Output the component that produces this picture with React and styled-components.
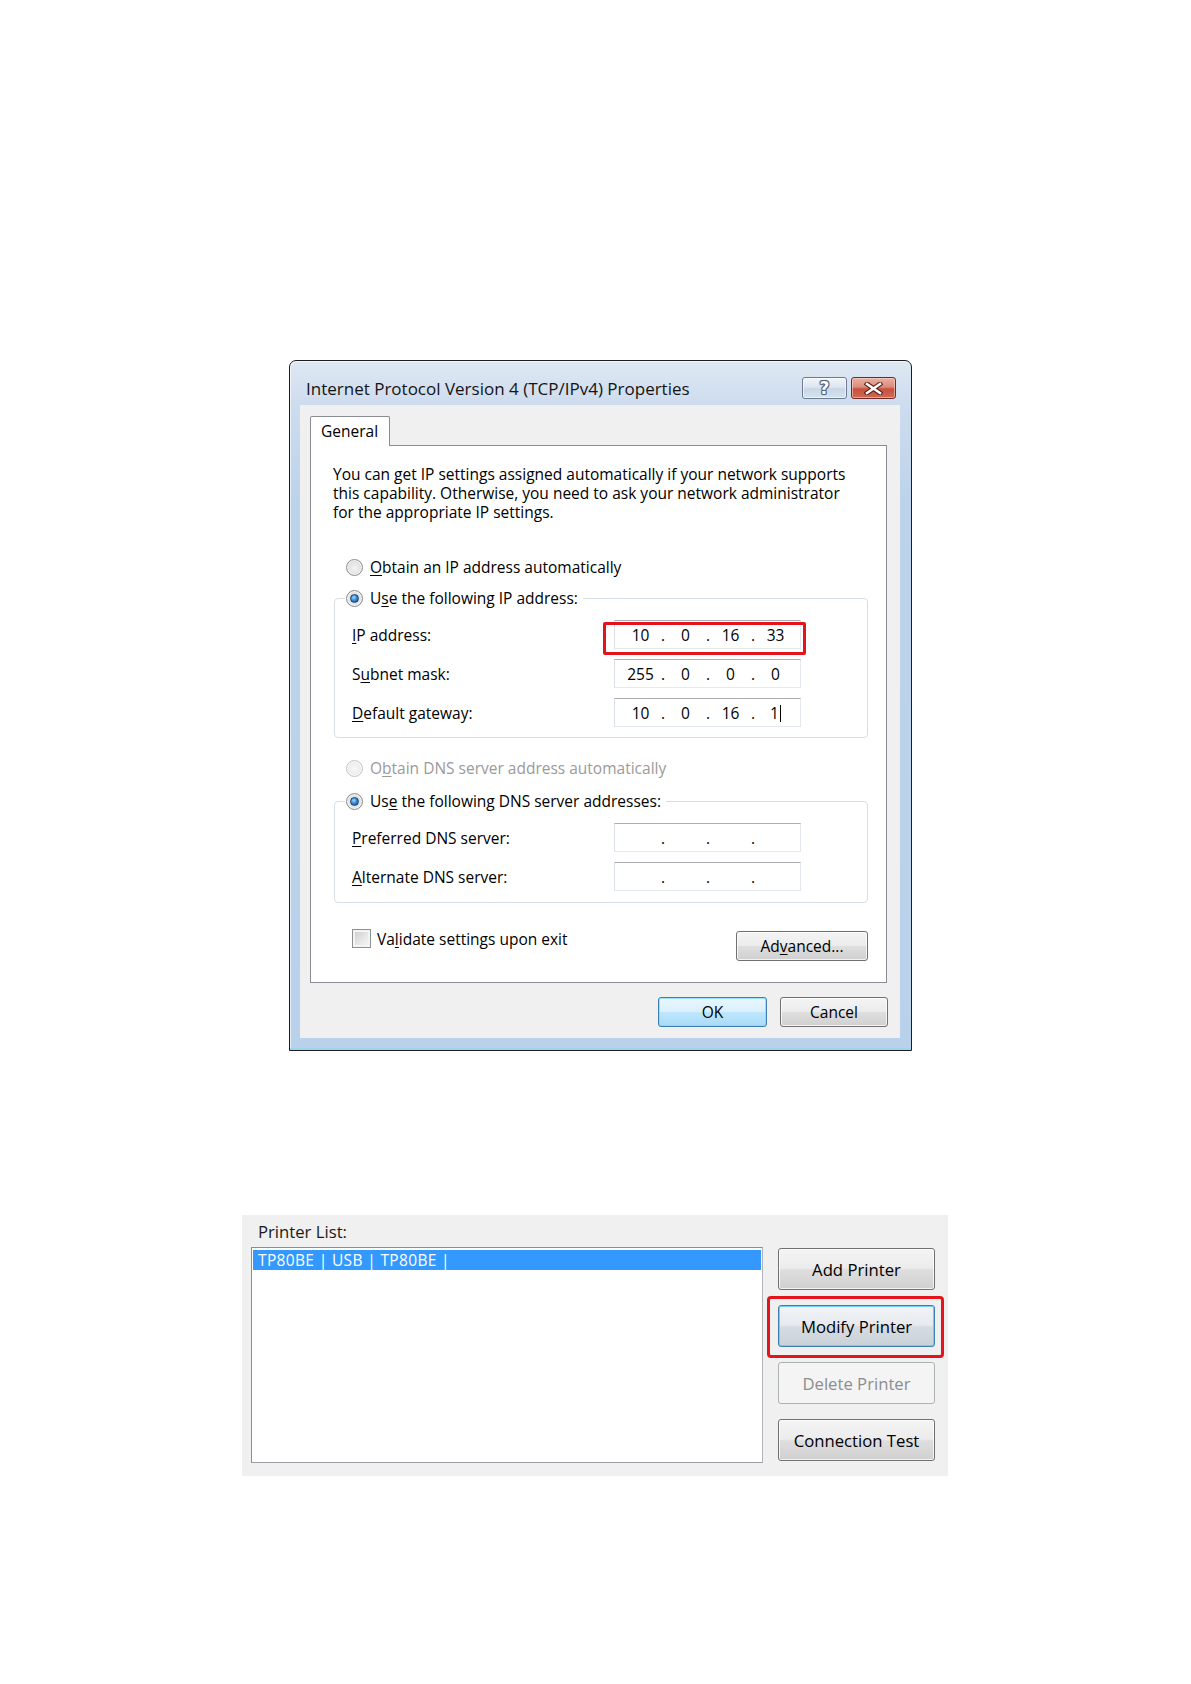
import React from "react";
import styled, { createGlobalStyle, css } from "styled-components";

const GlobalStyle = createGlobalStyle`
  html, body { margin: 0; padding: 0; background: #ffffff; }
  body {
    font-family: "Open Sans", "Noto Sans", "DejaVu Sans", sans-serif;
    color: #000;
    -webkit-font-smoothing: antialiased;
  }
  #root { width: 1191px; min-height: 1684px; }
  u { text-decoration-thickness: 1px; text-underline-offset: 2px; }
`;

const Page = styled.div`
  display: flex;
  flex-direction: column;
  align-items: flex-start;
  padding-top: 360px;
  padding-bottom: 208px;
`;

/* ---------- Dialog window ---------- */

const Dialog = styled.div`
  margin-left: 289px;
  width: 623px;
  height: 691px;
  box-sizing: border-box;
  border: 1px solid #1d1d1d;
  border-radius: 7px 7px 0 0;
  background: linear-gradient(
    to bottom,
    #dfe8f3 0px,
    #cddcee 44px,
    #bcd3eb 140px,
    #b9d1ea 100%
  );
  box-shadow: inset 0 -2px 0 #9fd6ee, inset 1px 1px 0 rgba(255, 255, 255, 0.6);
  display: flex;
  flex-direction: column;
  padding: 0 11px 12px 10px;
`;

const TitleBar = styled.div`
  height: 44px;
  box-sizing: border-box;
  padding: 10px 4px 0 6px;
  display: flex;
  align-items: center;
  gap: 4px;
`;

const Title = styled.div`
  flex: 1;
  font-size: 17px;
  color: #141414;
  white-space: nowrap;
`;

const CaptionButton = styled.div`
  width: 45px;
  height: 22px;
  box-sizing: border-box;
  border-radius: 3px;
  display: flex;
  align-items: center;
  justify-content: center;
  ${(p) =>
    p.$close
      ? css`
          border: 1px solid #6e2a24;
          background: linear-gradient(
            to bottom,
            #eab0a2 0%,
            #dc8c7c 45%,
            #c8503f 55%,
            #cf6a52 100%
          );
          box-shadow: inset 0 0 0 1px rgba(255, 220, 210, 0.55);
        `
      : css`
          border: 1px solid #6c7b90;
          background: linear-gradient(
            to bottom,
            #f1f5fa 0%,
            #dde6f1 45%,
            #c9d6e6 55%,
            #d6e2ef 100%
          );
          box-shadow: inset 0 0 0 1px rgba(255, 255, 255, 0.6);
        `}
`;

const HelpGlyph = styled.span`
  font-family: "DejaVu Sans", sans-serif;
  font-weight: bold;
  font-size: 17px;
  line-height: 1;
  margin-top: 1px;
  color: #ffffff;
  text-shadow: -1px 0 #4d5d73, 1px 0 #4d5d73, 0 -1px #4d5d73, 0 1px #4d5d73,
    -1px -1px #6d7c90, 1px 1px #6d7c90, 1px -1px #6d7c90, -1px 1px #6d7c90;
`;

const Client = styled.div`
  flex: 1;
  background: #f0f0f0;
  display: flex;
  flex-direction: column;
  padding: 11px 12px 11px 10px;
`;

const TabStrip = styled.div`
  display: flex;
  position: relative;
  z-index: 1;
  margin-bottom: -1px;
`;

const Tab = styled.div`
  width: 80px;
  height: 30px;
  box-sizing: border-box;
  border: 1px solid #898c95;
  border-bottom: none;
  border-radius: 2px 2px 0 0;
  background: #ffffff;
  padding-left: 10px;
  font-size: 15.5px;
  line-height: 28px;
`;

const TabPanel = styled.div`
  height: 538px;
  box-sizing: border-box;
  border: 1px solid #898c95;
  background: #ffffff;
  margin-right: 1px;
  padding: 0 18px 0 23px;
  display: flex;
  flex-direction: column;
  font-size: 15.5px;
`;

const Intro = styled.p`
  margin: 19px 0 0 -1px;
  line-height: 19px;
  white-space: nowrap;
`;

const RadioRow = styled.div`
  display: flex;
  align-items: center;
  gap: 7px;
  height: 20px;
  padding-left: 12px;
  margin-top: ${(p) => p.$mt || 0}px;
  color: ${(p) => (p.$disabled ? "#9a9a9a" : "#000")};
  white-space: nowrap;
`;

const Radio = styled.span`
  position: relative;
  width: 17px;
  height: 17px;
  box-sizing: border-box;
  border-radius: 50%;
  flex: none;
  border: 1px solid ${(p) => (p.$disabled ? "#c4c4c4" : "#8a8c8e")};
  background: ${(p) =>
    p.$disabled
      ? "radial-gradient(circle at 50% 50%, #f7f7f7 0, #e6e6e6 100%)"
      : "radial-gradient(circle at 50% 55%, #f4f4f4 0, #e2e2e2 55%, #cfcfcf 100%)"};
  box-shadow: inset 0 0 0 1px rgba(255, 255, 255, 0.7);
  ${(p) =>
    p.$checked &&
    css`
      &::after {
        content: "";
        position: absolute;
        left: 3px;
        top: 3px;
        width: 9px;
        height: 9px;
        box-sizing: border-box;
        border-radius: 50%;
        border: 1px solid #17426f;
        background: radial-gradient(
          circle at 40% 35%,
          #a6dcff 0,
          #3b8ad6 45%,
          #124b8c 100%
        );
      }
    `}
`;

const Group = styled.fieldset`
  margin: ${(p) => p.$mt || 0}px 0 0 0;
  border: 1px solid #d5dfe5;
  border-radius: 4px;
  padding: 12px 10px ${(p) => p.$pb || 10}px 17px;
  min-width: 0;
`;

const GroupLegend = styled.legend`
  margin-left: -7px;
  padding: 0 5px 0 1px;
  height: 20px;
  line-height: 20px;
`;

const LegendInner = styled.span`
  display: inline-flex;
  align-items: center;
  gap: 7px;
  height: 20px;
  white-space: nowrap;
`;

const FieldList = styled.div`
  display: flex;
  flex-direction: column;
  gap: 10px;
`;

const FieldRow = styled.div`
  display: flex;
  align-items: center;
  height: 29px;
`;

const FieldLabel = styled.span`
  width: 262px;
  flex: none;
  white-space: nowrap;
`;

const IpField = styled.div`
  position: relative;
  width: 187px;
  height: 29px;
  box-sizing: border-box;
  border: 1px solid #e3e9ef;
  border-top-color: #abadb3;
  border-left-color: #dbdfe6;
  background: #ffffff;
  display: flex;
  align-items: center;
  padding-left: 7px;
  ${(p) =>
    p.$highlight &&
    css`
      &::after {
        content: "";
        position: absolute;
        left: -12px;
        right: -6px;
        top: 1px;
        bottom: -7px;
        border: 3px solid #e3141b;
        border-radius: 2px;
      }
    `}
`;

const Octet = styled.span`
  width: 37px;
  text-align: center;
  white-space: nowrap;
`;

const Dot = styled.span`
  width: 8px;
  text-align: center;
`;

const Caret = styled.span`
  display: inline-block;
  width: 0;
  height: 17px;
  border-left: 1px solid #000;
  margin-left: 1px;
  vertical-align: -3px;
`;

const FooterRow = styled.div`
  display: flex;
  justify-content: space-between;
  align-items: flex-start;
  margin-top: 26px;
`;

const CheckRow = styled.div`
  display: flex;
  align-items: center;
  gap: 6px;
  padding-left: 18px;
  height: 19px;
  white-space: nowrap;
`;

const CheckBox = styled.span`
  width: 19px;
  height: 19px;
  box-sizing: border-box;
  border: 1px solid #8e8f8f;
  background: linear-gradient(135deg, #c9c9c9 0%, #e9e9e9 60%, #f7f7f7 100%);
  box-shadow: inset 0 0 0 2px #f4f4f4;
  flex: none;
`;

const WinButton = styled.div`
  box-sizing: border-box;
  width: ${(p) => p.$w}px;
  height: ${(p) => p.$h || 30}px;
  margin-top: ${(p) => p.$mt || 0}px;
  border-radius: 3px;
  display: flex;
  align-items: center;
  justify-content: center;
  font-size: ${(p) => p.$fs || 15.5}px;
  white-space: nowrap;
  position: relative;
  border: 1px solid #707070;
  color: #000;
  background: linear-gradient(
    to bottom,
    #f4f4f4 0%,
    #ececec 48%,
    #dedede 52%,
    #d0d0d0 100%
  );
  box-shadow: inset 0 0 0 1px rgba(255, 255, 255, 0.75);
  ${(p) =>
    p.$variant === "default" &&
    css`
      border-color: #3c7fb1;
      background: linear-gradient(
        to bottom,
        #eaf6fd 0%,
        #d9f0fc 48%,
        #bee6fd 52%,
        #a9dbf6 100%
      );
      box-shadow: inset 0 0 0 1px rgba(120, 220, 250, 0.7);
    `}
  ${(p) =>
    p.$variant === "focus" &&
    css`
      border-color: #3c7fb1;
      background: linear-gradient(
        to bottom,
        #f2f4f6 0%,
        #e6eaee 48%,
        #d6dce2 52%,
        #c9d1d8 100%
      );
      box-shadow: inset 0 0 0 1px #6fd0f2;
    `}
  ${(p) =>
    p.$variant === "disabled" &&
    css`
      border-color: #adb2b5;
      background: #f4f4f4;
      color: #8d8d8d;
      box-shadow: none;
    `}
  ${(p) =>
    p.$highlight &&
    css`
      &::after {
        content: "";
        position: absolute;
        left: -12px;
        right: -10px;
        top: -10px;
        bottom: -12px;
        border: 3px solid #e3141b;
        border-radius: 4px;
      }
    `}
`;

const DialogButtons = styled.div`
  display: flex;
  justify-content: flex-end;
  gap: 13px;
  margin-top: 14px;
`;

/* ---------- Printer list panel ---------- */

const PrinterPanel = styled.div`
  margin-top: 164px;
  margin-left: 242px;
  width: 706px;
  height: 261px;
  box-sizing: border-box;
  background: #f0f0f0;
  padding: 7px 13px 13px 9px;
  display: grid;
  grid-template-columns: 512px 157px;
  grid-template-rows: 20px 1fr;
  column-gap: 15px;
  row-gap: 5px;
`;

const PanelLabel = styled.div`
  grid-column: 1;
  grid-row: 1;
  padding-left: 7px;
  font-size: 16.7px;
  line-height: 20px;
  color: #1a1a1a;
`;

const ListBox = styled.div`
  grid-column: 1;
  grid-row: 2;
  box-sizing: border-box;
  border: 1px solid #8a8d92;
  border-right-color: #b0b3b7;
  border-bottom-color: #9a9da2;
  background: #ffffff;
  padding: 2px 1px;
`;

const ListItem = styled.div`
  height: 20px;
  line-height: 20px;
  padding-left: 5px;
  background: ${(p) => (p.$selected ? "#3399ff" : "transparent")};
  color: ${(p) => (p.$selected ? "#ffffff" : "#000")};
  font-size: 15.5px;
  letter-spacing: 0.35px;
  white-space: nowrap;
`;

const ButtonColumn = styled.div`
  grid-column: 2;
  grid-row: 2;
  display: flex;
  flex-direction: column;
  gap: 15px;
  padding-top: 1px;
`;

function CloseGlyph() {
  return (
    <svg width="19" height="13" viewBox="0 0 19 13">
      <path
        d="M3 2 L16 11 M16 2 L3 11"
        stroke="#5a1d17"
        strokeWidth="4.6"
        strokeLinecap="square"
        fill="none"
      />
      <path
        d="M3 2 L16 11 M16 2 L3 11"
        stroke="#ffffff"
        strokeWidth="2.6"
        strokeLinecap="square"
        fill="none"
      />
    </svg>
  );
}

function IpValue({ parts, caret }) {
  return (
    <>
      {parts.map((v, i) => (
        <React.Fragment key={i}>
          <Octet>
            {v}
            {caret && i === parts.length - 1 ? <Caret /> : null}
          </Octet>
          {i < parts.length - 1 ? <Dot>.</Dot> : null}
        </React.Fragment>
      ))}
    </>
  );
}

export default function App() {
  return (
    <>
      <GlobalStyle />
      <Page>
        <Dialog>
          <TitleBar>
            <Title>Internet Protocol Version 4 (TCP/IPv4) Properties</Title>
            <CaptionButton>
              <HelpGlyph>?</HelpGlyph>
            </CaptionButton>
            <CaptionButton $close>
              <CloseGlyph />
            </CaptionButton>
          </TitleBar>
          <Client>
            <TabStrip>
              <Tab>General</Tab>
            </TabStrip>
            <TabPanel>
              <Intro>
                You can get IP settings assigned automatically if your network supports
                <br />
                this capability. Otherwise, you need to ask your network administrator
                <br />
                for the appropriate IP settings.
              </Intro>

              <RadioRow $mt={35}>
                <Radio />
                <span>
                  <u>O</u>btain an IP address automatically
                </span>
              </RadioRow>

              <Group $mt={11}>
                <GroupLegend>
                  <LegendInner>
                    <Radio $checked />
                    <span>
                      U<u>s</u>e the following IP address:
                    </span>
                  </LegendInner>
                </GroupLegend>
                <FieldList>
                  <FieldRow>
                    <FieldLabel>
                      <u>I</u>P address:
                    </FieldLabel>
                    <IpField $highlight>
                      <IpValue parts={["10", "0", "16", "33"]} />
                    </IpField>
                  </FieldRow>
                  <FieldRow>
                    <FieldLabel>
                      S<u>u</u>bnet mask:
                    </FieldLabel>
                    <IpField>
                      <IpValue parts={["255", "0", "0", "0"]} />
                    </IpField>
                  </FieldRow>
                  <FieldRow>
                    <FieldLabel>
                      <u>D</u>efault gateway:
                    </FieldLabel>
                    <IpField>
                      <IpValue parts={["10", "0", "16", "1"]} caret />
                    </IpField>
                  </FieldRow>
                </FieldList>
              </Group>

              <RadioRow $mt={20} $disabled>
                <Radio $disabled />
                <span>
                  O<u>b</u>tain DNS server address automatically
                </span>
              </RadioRow>

              <Group $mt={13} $pb={11}>
                <GroupLegend>
                  <LegendInner>
                    <Radio $checked />
                    <span>
                      Us<u>e</u> the following DNS server addresses:
                    </span>
                  </LegendInner>
                </GroupLegend>
                <FieldList>
                  <FieldRow>
                    <FieldLabel>
                      <u>P</u>referred DNS server:
                    </FieldLabel>
                    <IpField>
                      <IpValue parts={["", "", "", ""]} />
                    </IpField>
                  </FieldRow>
                  <FieldRow>
                    <FieldLabel>
                      <u>A</u>lternate DNS server:
                    </FieldLabel>
                    <IpField>
                      <IpValue parts={["", "", "", ""]} />
                    </IpField>
                  </FieldRow>
                </FieldList>
              </Group>

              <FooterRow>
                <CheckRow>
                  <CheckBox />
                  <span>
                    Va<u>l</u>idate settings upon exit
                  </span>
                </CheckRow>
                <WinButton $w={132} $mt={2}>
                  <span>
                    Ad<u>v</u>anced...
                  </span>
                </WinButton>
              </FooterRow>
            </TabPanel>
            <DialogButtons>
              <WinButton $w={109} $variant="default">
                OK
              </WinButton>
              <WinButton $w={108}>Cancel</WinButton>
            </DialogButtons>
          </Client>
        </Dialog>

        <PrinterPanel>
          <PanelLabel>Printer List:</PanelLabel>
          <ListBox>
            <ListItem $selected>TP80BE | USB | TP80BE |</ListItem>
          </ListBox>
          <ButtonColumn>
            <WinButton $w={157} $h={42} $fs={16.7}>
              Add Printer
            </WinButton>
            <WinButton $w={157} $h={42} $fs={16.7} $variant="focus" $highlight>
              Modify Printer
            </WinButton>
            <WinButton $w={157} $h={42} $fs={16.7} $variant="disabled">
              Delete Printer
            </WinButton>
            <WinButton $w={157} $h={42} $fs={16.7}>
              Connection Test
            </WinButton>
          </ButtonColumn>
        </PrinterPanel>
      </Page>
    </>
  );
}
